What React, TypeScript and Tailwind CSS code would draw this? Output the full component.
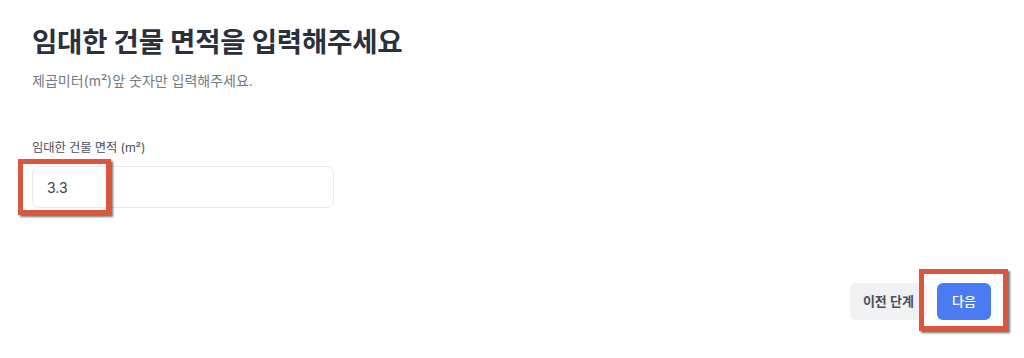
import React from "react";

export default function App() {
  return (
    <div
      className="relative h-[358px] w-[1024px] overflow-hidden bg-white"
      style={{ fontFamily: '"Inter", "Noto Sans CJK KR", sans-serif' }}
    >
      <div className="flex h-full flex-col px-8 pt-[25px]">
        <h1 className="text-[27.5px] font-bold leading-[35px] tracking-[-0.2px] text-[#2b313b]">
          임대한 건물 면적을 입력해주세요
        </h1>
        <p className="mt-[11px] text-[14px] leading-[20px] text-[#737a85]">
          제곱미터(m²)앞 숫자만 입력해주세요.
        </p>
        <label className="mt-[49px] text-[12.3px] leading-[16px] tracking-[-0.1px] text-[#4a505a]">
          임대한 건물 면적 (m²)
        </label>
        <div className="mt-[10px] flex h-[42px] w-[302px] items-center rounded-[7px] border border-[#e8e9ec] px-[14px] text-[14px] text-[#3a3f47]">
          3.3
        </div>
        <div className="mt-[75px] flex justify-end gap-[10px] pr-[1px]">
          <button className="h-[37px] rounded-[6px] bg-[#f0f1f3] px-[13px] text-[13px] font-semibold text-[#4b5058]">
            이전 단계
          </button>
          <button className="h-[37px] w-[54px] rounded-[6px] bg-[#4a7bf0] text-[13px] font-medium text-white">
            다음
          </button>
        </div>
      </div>

      <div className="pointer-events-none absolute left-[18px] top-[159px] h-[56px] w-[93px] border-[5px] border-[#d9573d] shadow-[2px_2px_2px_rgba(0,0,0,0.55)]" />
      <div className="pointer-events-none absolute left-[919px] top-[269px] h-[62px] w-[89px] border-[5px] border-[#d9573d] shadow-[2px_2px_2px_rgba(0,0,0,0.55)]" />
    </div>
  );
}
